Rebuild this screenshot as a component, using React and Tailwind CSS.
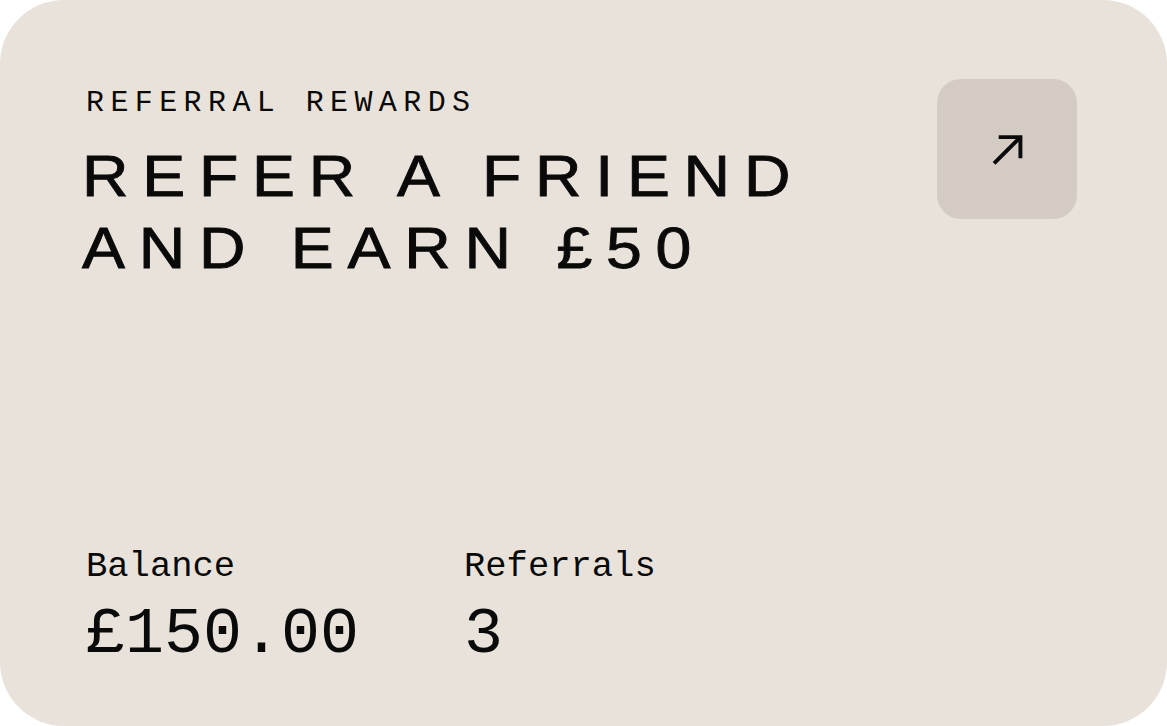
export default function App() {
  return (
    <div className="w-[1167px] h-[726px] bg-white">
      <div className="w-full h-full rounded-[64px] bg-[#e8e2da] text-[#0a0a0a] flex flex-col justify-between pl-[86px] pr-[90px] pt-[79px] pb-[55px]">
        <div className="flex justify-between items-start">
          <div className="flex flex-col">
            <div className="text-[30px] leading-[48px] tracking-[6.4px] font-['Liberation_Mono',monospace]">
              REFERRAL REWARDS
            </div>
            <h1 className="mt-[13px] -ml-[4px] origin-left scale-x-[1.11] text-[58px] leading-[72px] tracking-[12.4px] font-normal font-['Liberation_Sans',sans-serif] whitespace-nowrap [-webkit-text-stroke:0.9px_#0a0a0a]">
              REFER A FRIEND
              <br />
              AND EARN £50
            </h1>
          </div>
          <button className="w-[140px] h-[140px] rounded-[24px] bg-[#d4ccc3] flex items-center justify-center">
            <svg width="31" height="31" viewBox="0 0 30 30" fill="none" stroke="#0a0a0a" strokeWidth="3.8">
              <path d="M2 28.5 L27.5 3" />
              <path d="M6.5 3 H27.5 V23.5" />
            </svg>
          </button>
        </div>
        <div className="flex">
          <div className="w-[378px] flex flex-col">
            <div className="text-[35.5px] leading-[44px] font-['Liberation_Mono',monospace]">Balance</div>
            <div className="mt-[10px] text-[65px] leading-[72px] font-['Liberation_Mono',monospace]">£150.00</div>
          </div>
          <div className="flex flex-col">
            <div className="text-[35.5px] leading-[44px] font-['Liberation_Mono',monospace]">Referrals</div>
            <div className="mt-[10px] text-[65px] leading-[72px] font-['Liberation_Mono',monospace]">3</div>
          </div>
        </div>
      </div>
    </div>
  );
}
